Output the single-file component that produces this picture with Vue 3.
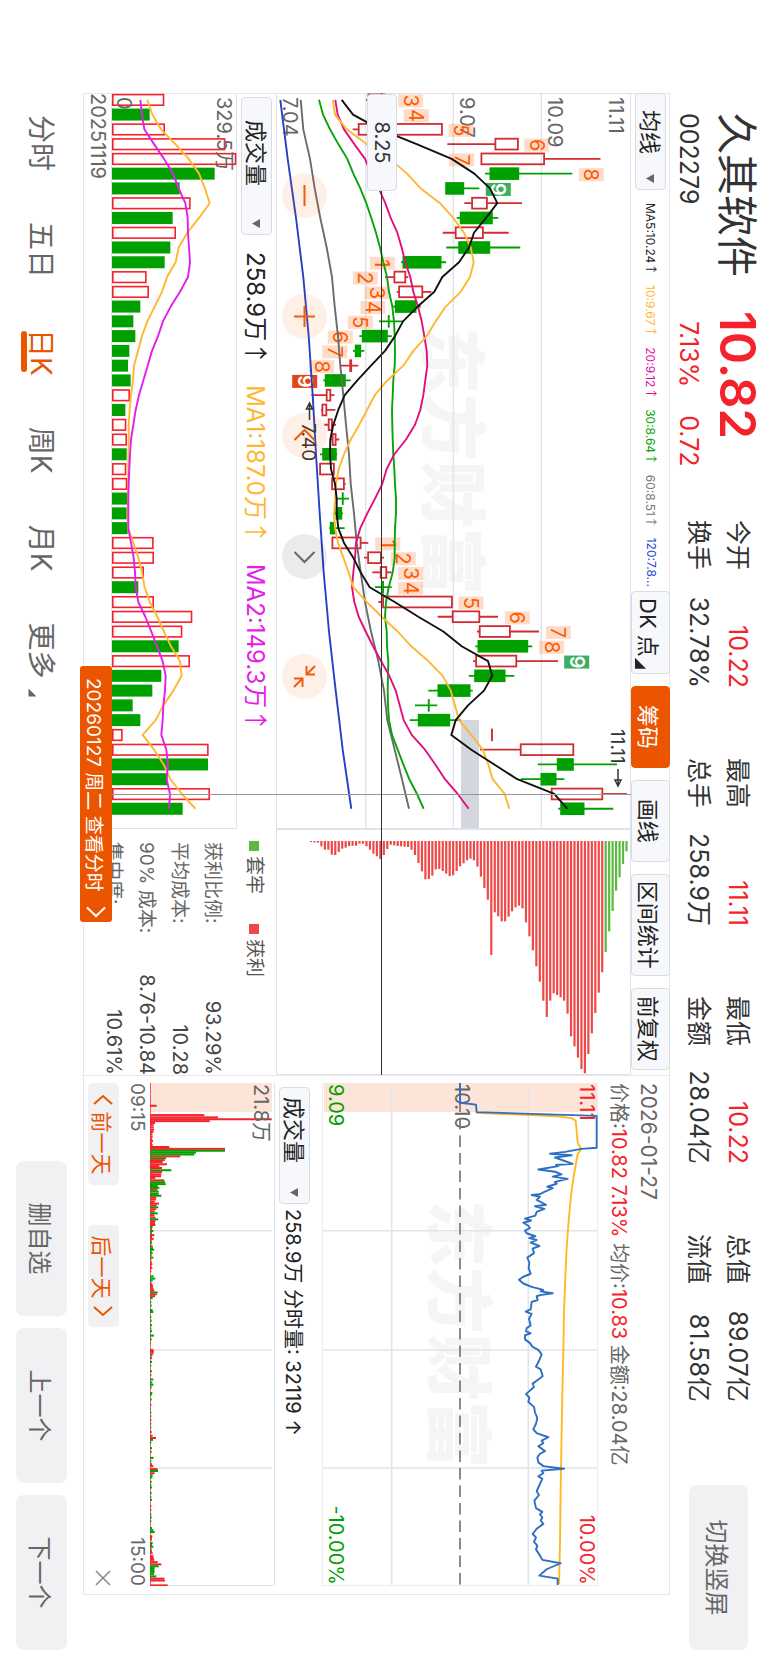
<script setup>
import { ref } from 'vue'

const period = ref('日K')
const mainIndicator = ref('均线')
const subIndicator = ref('成交量')
const minuteIndicator = ref('成交量')

const stats = [
  [['今开', '10.22', true], ['换手', '32.78%', false]],
  [['最高', '11.11', true], ['总手', '258.9万', false]],
  [['最低', '10.22', true], ['金额', '28.04亿', false]],
  [['总值', '89.07亿', false], ['流值', '81.58亿', false]]
]

const averages = [
  ['MA5:10.24', 'black', '↑'],
  ['10:9.67', 'amber', '↑'],
  ['20:9.12', 'pink', '↑'],
  ['30:8.64', 'green', '↑'],
  ['60:8.51', 'gray', '↑'],
  ['120:7.8...', 'blue', '']
]

const readings = [
  ['258.9万', 'black'],
  ['MA1:187.0万', 'amber'],
  ['MA2:149.3万', 'violet']
]

const tools = ['筹码', '画线', '区间统计', '前复权']

const costs = [
  ['获利比例:', '93.29%'],
  ['平均成本:', '10.28'],
  ['90% 成本:', '8.76-10.84'],
  ['集中度:', '10.61%']
]

const periods = ['分时', '五日', '日K', '周K', '月K', '更多']

/* Daily candles: [direction, body low, body high, wick low, wick high] */
const STEP = 14.77
const cx = (i) => 6.8 + STEP * i
const py = (v) => 631 - v
const candles = [
  ['r', 368, 385, 366, 385], ['g', 375, 390, 372, 397], ['r', 358.3, 442.3, 352.7, 442.3],
  ['r', 495, 518.3, 447.3, 518.3], ['r', 481, 544.5, 481, 600.5], ['g', 490, 518.7, 485, 572.3],
  ['g', 445.7, 463.7, 445.7, 479.3], ['r', 471.7, 487.3, 464.3, 522], ['g', 460.3, 492.3, 456.7, 498.3],
  ['r', 455.3, 483.3, 442.7, 508.7], ['g', 458.7, 489.7, 446.3, 520.3], ['g', 403, 441, 401, 446],
  ['r', 394, 405.7, 385, 408.3], ['r', 398.7, 422.7, 396.7, 431.3], ['g', 395.3, 416, 392.3, 420.7],
  ['g', 388.8, 389.2, 379, 402.7], ['g', 362.3, 387.3, 359.3, 391.7], ['g', 355.3, 360.7, 353, 364.3],
  ['r', 349.8, 351.6, 340.7, 358.3], ['g', 325.3, 345.3, 323.3, 350.7], ['r', 326.3, 330.7, 311.3, 334.3],
  ['r', 322, 326.7, 321, 335.3], ['r', 328.3, 332.3, 324.3, 336], ['r', 332.3, 336, 330.3, 339.3],
  ['g', 322.7, 336.3, 320, 337.3], ['r', 319.7, 334.3, 319.7, 334.3], ['r', 331.7, 344.3, 331.7, 345.7],
  ['g', 342.8, 343.2, 336.3, 349], ['g', 336, 341.7, 334, 343], ['g', 330.3, 334.7, 329.3, 344.7],
  ['r', 332, 361, 332, 368.3], ['r', 367.7, 381.3, 364, 384], ['r', 380.3, 386.7, 372.3, 391.7],
  ['g', 383.1, 383.5, 375, 391.7], ['r', 382.7, 452.3, 378.3, 452.3], ['r', 452.3, 479.7, 437.7, 498],
  ['r', 479.3, 510.3, 477, 539], ['g', 478, 527.7, 475.3, 532.3], ['r', 475.7, 516.7, 473, 558],
  ['g', 474.7, 505, 468.7, 514.3], ['g', 438, 470, 428.3, 472.7], ['g', 428.8, 429.2, 415, 437.3],
  ['g', 418.3, 449.7, 409.7, 461], ['r', 492, 492.4, 492, 492.4], ['r', 520.3, 573.7, 480, 573.7],
  ['g', 557.3, 573.3, 537.7, 617], ['g', 541, 556, 520.7, 564.3], ['r', 551.3, 602.7, 551.3, 627],
  ['g', 560.7, 584, 558.3, 613.3]
]

const curve = (list, stride = 1) => list.map((v, k) => `${cx(k * stride)},${py(v)}`).join(' ')
const priceLines = [
  ['blue', curve([280.3, 287.7, 296, 303.3, 308.7, 312.7, 316, 319.7, 323.7, 329, 335.7, 342.7, 351.3], 4)],
  ['gray', curve([300.7, 303.3, 310, 314.7, 320.3, 326.7, 332, 334.7, 338, 340.3, 343.3, 346, 349, 350.7, 354, 356.7, 360.7, 365, 371, 378.3, 384, 387.3, 394.7, 402, 409], 2)],
  ['green', curve([319, 323, 330, 338.3, 347.3, 353.3, 360.3, 366.3, 371.3, 376, 380, 383.3, 387, 389, 392.3, 394, 394.7, 395, 394.7, 393.3, 392.7, 392, 392.3, 392.7, 393.3, 394.3, 395, 396, 396, 395, 394.7, 394.7, 392.7, 388.7, 386, 385, 386.7, 387, 388.3, 388, 387.7, 388, 389, 392, 397.7, 403.3, 409.3, 417, 423.7])],
  ['pink', curve([335.3, 337.7, 344, 354.3, 365, 371, 378.7, 385.3, 390.7, 397.3, 401.7, 405.3, 410.3, 413.3, 418, 421.7, 424.3, 426.7, 427.3, 425.3, 423.3, 420.3, 415, 406, 394.3, 386.7, 382.3, 375, 367.3, 360.3, 356, 355, 353.3, 352, 354.3, 358.7, 365.7, 373, 381, 389.3, 395.7, 399.7, 403.7, 411.7, 425, 435.3, 445, 457.7, 468.7])],
  ['amber', curve([332.7, 335, 346.7, 366.7, 390, 407, 420.7, 440, 453.3, 464, 470.7, 473.7, 470, 460.7, 445.7, 435.7, 426.7, 413.3, 403.3, 387.3, 374.7, 367, 359.3, 350.7, 344, 338.7, 336, 335.3, 334, 335, 338, 343.3, 348.7, 353.3, 366.7, 381.7, 397.7, 411.3, 428.3, 442.7, 450.7, 455, 459, 471.3, 482.7, 488.3, 492.7, 504.7, 509.3])],
  ['black', curve([341.7, 353, 380, 416.7, 451.7, 474.3, 490, 497.3, 486, 474, 469, 459, 442.3, 434.3, 417.7, 403, 395, 385, 371, 357.3, 344.7, 338.3, 333.3, 330.3, 330, 331, 335, 336.7, 336.7, 338.3, 344, 353.3, 360.7, 369.7, 394.7, 418.3, 443.3, 461.7, 488, 492.3, 484, 468, 455.7, 451.3, 471.3, 494.3, 517.3, 554.3, 567.3])]
]

/* Nine-turn counters: [digit, candle index, level, kind] */
const counters = [
  ['3', 0, 410.7], ['4', 1, 416.3], ['5', 2, 461], ['6', 3, 536.7], ['7', 4, 461.7], ['8', 5, 591.3], ['9', 6, 498.3, 'top'],
  ['1', 11, 382.3], ['2', 12, 365.3], ['3', 13, 377], ['4', 14, 373], ['5', 15, 360.3], ['6', 16, 340.3], ['7', 17, 334.7], ['8', 18, 321.7], ['9', 19, 304.7, 'low'],
  ['1', 30, 387.7], ['2', 31, 403.3], ['3', 32, 410.7], ['4', 33, 410.7], ['5', 34, 471], ['6', 35, 517.3], ['7', 36, 558.3], ['8', 37, 551.7], ['9', 38, 576.7, 'top']
]

const axis = [['11.11', 615.7], ['10.09', 555], ['9.07', 466.7], ['7.04', 290]]

/* Chip distribution, highest price first; the leading seven are trapped chips */
const chips = [
  35, 73, 113, 153, 214, 275, 337, 398, 459, 520, 581, 643, 701, 688, 654, 620, 590, 522, 483, 473, 466, 461,
  483, 532, 483, 426, 380, 332, 290, 248, 206, 198, 203, 215, 231, 245, 245, 230, 218, 346, 180, 145, 111, 81,
  62, 57, 62, 71, 80, 94, 107, 109, 102, 94, 88, 89, 108, 118, 119, 95, 70, 46, 30, 22, 21, 20, 19, 17, 15, 28,
  46, 58, 50, 42, 30, 20, 12, 12, 18, 18, 19, 24, 27, 37, 46, 45, 30, 30, 20, 9, 8, 7
]

const volumes = [
  494, 450, 496, 677, 710, 645, 540, 573, 519, 529, 512, 495, 441, 448, 422, 401, 407, 389, 385, 393, 391, 377,
  380, 382, 381, 380, 383, 383, 381, 384, 462, 463, 433, 416, 463, 578, 548, 537, 571, 485, 458, 399, 422, 369,
  627, 625, 503, 631, 549
]
const volumeKinds = 'rgrrrggrgrggrrggggggrgrrgrrgggrrrgrrrgrggggrrggrg'
const vy = (e) => 125 - (e - 337) / 3
const volumeBars = volumes.map((e, i) => ({ x: cx(i) - 6, y: vy(e), h: (e - 337) / 3, kind: volumeKinds[i] }))
const vcurve = (list) => list.map((e, i) => `${cx(i)},${vy(e)}`).join(' ')
const volumeLines = [
  ['amber', vcurve([443, 458, 484, 527, 567, 598, 616, 630, 598, 563, 537, 528, 502, 487, 465, 443, 427, 415, 403, 400, 394, 390, 387, 387, 386, 386, 385, 385, 384, 385, 401, 416, 427, 435, 450, 473, 493, 514, 541, 546, 521, 491, 468, 429, 463, 492, 512, 547, 587])],
  ['violet', vcurve([422, 427, 434, 463, 493, 520, 537, 557, 564, 565, 568, 571, 565, 541, 513, 490, 475, 457, 444, 431, 418, 408, 401, 394, 391, 389, 387, 386, 386, 386, 394, 402, 406, 408, 416, 437, 455, 472, 489, 498, 496, 491, 489, 485, 500, 505, 501, 511, 508])]
]

/* Intraday series as flat [level, time] pairs */
const minuteX = (t) => t * 0.375 - 8
const trace = (flat) => {
  const out = []
  for (let i = 0; i < flat.length; i += 2) out.push(`${minuteX(flat[i + 1])},${288 - flat[i] / 3}`)
  return out.join(' ')
}
const averageTrace = trace([500, 101, 640, 106, 740, 110, 785, 115, 797, 122, 800, 150, 803, 180, 813, 197, 803, 212, 797, 240, 790, 275, 782, 330, 775, 400, 770, 460, 766, 540, 762, 630, 760, 740, 757, 850, 754, 1000, 752, 1100, 750, 1250, 747, 1358])
const priceTrace = trace([
  450, 22, 450, 74, 498, 79, 500, 99, 860, 109, 860, 194, 815, 197, 765, 205, 720, 210, 785, 214, 735, 220, 788, 237,
  738, 240, 745, 243, 685, 252, 735, 258, 755, 265, 728, 271, 773, 277, 735, 285, 740, 290, 712, 298, 728, 302,
  700, 313, 690, 318, 665, 320, 690, 325, 680, 333, 708, 346, 675, 350, 703, 357, 680, 365, 676, 375, 645, 383,
  663, 388, 640, 394, 655, 402, 660, 408, 645, 415, 650, 422, 676, 430, 658, 435, 680, 440, 662, 447, 688, 456,
  668, 463, 672, 475, 652, 487, 658, 500, 656, 515, 662, 530, 640, 538, 627, 546, 640, 556, 665, 565, 700, 573,
  692, 577, 728, 582, 690, 587, 680, 590, 683, 600, 665, 605, 662, 625, 647, 631, 665, 637, 657, 650, 662, 668,
  650, 675, 648, 683, 662, 689, 645, 694, 645, 705, 660, 715, 668, 725, 685, 733, 695, 745, 688, 760, 678, 778,
  692, 785, 698, 803, 685, 812, 668, 823, 672, 832, 648, 851, 658, 860, 655, 872, 672, 885, 675, 900, 682, 915,
  678, 930, 670, 945, 680, 955, 715, 966, 695, 975, 700, 982, 685, 990, 705, 1003, 690, 1010, 682, 1020, 685, 1033,
  700, 1043, 762, 1050, 695, 1055, 700, 1062, 685, 1070, 697, 1077, 690, 1090, 680, 1110, 687, 1120, 673, 1135,
  678, 1155, 697, 1165, 690, 1172, 697, 1180, 692, 1188, 700, 1197, 680, 1210, 668, 1224, 678, 1233, 672, 1245,
  682, 1255, 678, 1265, 690, 1282, 697, 1293, 752, 1302, 710, 1318, 688, 1335, 743, 1343, 743, 1360
])

const minuteVolumes = `82r472 107r615 113r656 118r817 123r631 128r467 134r463 140r463 146r464 152r462 158r459 164r460 170r459 176r461
182r458 187r460 192r510 197r677 202g677 207g590 212g585 217r543 222g500 227r496 232r490 238r503 243r480 248r488 254g516 259r488
265r486 270r485 275r468 281r495 286g497 291g499 296g475 301g480 306r474 311g478 317g478 322g486 327r471 332r470 338r466 343r479
348r472 353g477 358r470 364r466 369g475 374r465 380r468 385g477 390r468 395r467 400r468 405g460 410r458 416g462 422g458 427r465
432r458 437r463 442r457 447g458 452g456 457r460 462g461 466g464 471g457 475g460 481r457 487g462 493r456 500r458 505r459 510r456
515r459 523r456 537g463 543g468 548g460 555r457 560r460 565r461 570r463 575r465 580g475 585r472 590r467 595g460 605g456 615g457
627g460 632g462 645g456 655g457 667g458 676g456 683g458 695g464 705g457 715r455 733r462 738r464 743r462 748g459 755r458 765g458
775g456 790g458 800r456 812g462 820g459 826g462 833g457 848g459 853g457 865g457 880r456 890g455 900g456 910r456 920g456 930r456
940g456 952r457 962r460 968r470 973g461 980g456 995g458 1005g457 1021g463 1030g456 1038r458 1043r462 1051r475 1056g476 1062r466
1068g460 1073g459 1085g457 1093g456 1100g458 1115g457 1125g456 1133g458 1150r456 1160r456 1172g456 1180g457 1190g456 1208g458
1214g462 1219g466 1230r459 1235r458 1240r457 1248g460 1253r458 1258g462 1265g457 1270r458 1275r460 1283r462 1288r463 1293r465
1299r475 1305r486 1310g478 1315g466 1320g465 1325g466 1331g464 1337g471 1343r495 1348r497 1361r505`
  .split(/\s+/)
  .map((token) => {
    const [, t, kind, e] = token.match(/(\d+)([rg])(\d+)/)
    const h = (e - 452) / 3
    return { x: minuteX(t) - 1, y: 125 - h, h, kind }
  })
</script>

<template>
  <div class="viewport">
    <main class="stage">
      <header class="header">
        <div class="identity">
          <h1>久其软件</h1>
          <p>002279</p>
        </div>
        <div class="quote">
          <strong>10.82</strong>
          <p><span>7.13%</span><span>0.72</span></p>
        </div>
        <div class="stats">
          <dl v-for="(column, i) in stats" :key="i">
            <div v-for="row in column" :key="row[0]">
              <dt>{{ row[0] }}</dt>
              <dd :class="{ up: row[2] }">{{ row[1] }}</dd>
            </div>
          </dl>
        </div>
        <button class="soft switch" type="button">切换竖屏</button>
      </header>

      <div class="panel">
        <section class="daily">
          <div class="toolbar">
            <label class="pick pick-main">
              <select v-model="mainIndicator" aria-label="主图指标"><option>均线</option></select>
              <i class="caret"></i>
            </label>
            <ul class="averages">
              <li v-for="a in averages" :key="a[0]" :class="'ink-' + a[1]">{{ a[0] }}<span v-if="a[2]" class="arrow">{{ a[2] }}</span></li>
            </ul>
            <div class="tools">
              <button class="tool corner" type="button">DK 点</button>
              <button v-for="t in tools" :key="t" class="tool" :class="{ on: t === '筹码' }" type="button">{{ t }}</button>
            </div>
          </div>

          <div class="charts">
            <svg viewBox="0 0 736 355" class="kline">
              <text class="watermark" x="234" y="203">东方财富</text>
              <rect x="627" y="152" width="109" height="18" fill="#d3d6dc" />
              <path class="grid" d="M0 89.7H736M0 177.7H736M0 265.3H736" />
              <path class="frame" d="M0.5 0.5H735.5V354.5H0.5Z" />
              <text v-for="a in axis" :key="a[0]" class="axis" x="4" :y="py(a[1]) + 7">{{ a[0] }}</text>
              <g v-for="(c, i) in candles" :key="i" :class="'candle-' + c[0]">
                <path :d="`M${cx(i)} ${py(c[4])}V${py(c[2])}M${cx(i)} ${py(c[1])}V${py(c[3])}`" />
                <rect :x="cx(i) - 5.4" :y="py(c[2]) + 0.4" width="10.8" :height="Math.max(c[2] - c[1] - 0.8, 0.1)" />
              </g>
              <g v-for="(n, i) in counters" :key="'n' + i" class="counter" :class="n[3]">
                <rect :x="cx(n[1]) - 5.5" :y="py(n[2]) - 12.5" width="13" height="25" />
                <text :x="cx(n[1]) + 1" :y="py(n[2]) + 7">{{ n[0] }}</text>
              </g>
              <polyline v-for="l in priceLines" :key="l[0]" class="line" :class="'stroke-' + l[0]" :points="l[1]" />
              <g class="mark">
                <text x="330" y="329">7.40</text>
                <path d="M327 321.5H310M316 318.5L310 321.5L316 324.5Z" />
                <text x="636" y="20">11.11</text>
                <path d="M676 13H692M687 10L693 13L687 16Z" />
              </g>
            </svg>
            <svg viewBox="0 0 246 355" class="chips">
              <path class="frame" d="M0.5 0.5H245.5V354.5H0.5Z" />
              <rect
                v-for="(e, i) in chips"
                :key="i"
                :x="12"
                :y="3.4 + i * 3.467"
                :width="(e - 4) / 3"
                height="2.2"
                :fill="i < 7 ? '#5cb942' : '#ef4848'"
              />
            </svg>
          </div>

          <div class="subhead">
            <label class="pick pick-sub">
              <select v-model="subIndicator" aria-label="副图指标"><option>成交量</option></select>
              <i class="caret"></i>
            </label>
            <p class="readings">
              <span v-for="r in readings" :key="r[0]" :class="'ink-' + r[1]">{{ r[0] }}<span class="arrow">↑</span></span>
            </p>
            <p class="legend"><span class="trapped">套牢</span><span class="profit">获利</span></p>
          </div>

          <div class="lower">
            <div class="volume">
              <svg viewBox="0 0 736 125">
                <path class="frame" d="M0 0.5H735.5V125" />
                <rect
                  v-for="(b, i) in volumeBars"
                  :key="i"
                  :class="'vol-' + b.kind"
                  :x="b.kind === 'r' ? b.x + 0.8 : b.x"
                  :y="b.kind === 'r' ? b.y + 0.8 : b.y"
                  :width="b.kind === 'r' ? 10.6 : 12"
                  :height="b.kind === 'r' ? b.h - 1.6 : b.h"
                />
                <polyline v-for="l in volumeLines" :key="l[0]" class="line" :class="'stroke-' + l[0]" :points="l[1]" />
                <text class="axis" x="4" y="20">329.5万</text>
                <text class="axis" x="4" y="120">0</text>
              </svg>
              <p class="from">20251119</p>
            </div>
            <dl class="costs">
              <div v-for="c in costs" :key="c[0]">
                <dt>{{ c[0] }}</dt>
                <dd>{{ c[1] }}</dd>
              </div>
            </dl>
          </div>

          <i class="cross-v"></i>
          <i class="cross-h"></i>
          <span class="price-tag">8.25</span>
          <button class="round zoom-out" type="button" aria-label="缩小">
            <svg viewBox="0 0 45 45"><path d="M12 22.5H33" /></svg>
          </button>
          <button class="round zoom-in" type="button" aria-label="放大">
            <svg viewBox="0 0 45 45"><path d="M12 22.5H33M22.5 12V33" /></svg>
          </button>
          <button class="round prev" type="button" aria-label="向左">
            <svg viewBox="0 0 45 45"><path d="M27 12.5L17 22.5L27 32.5" /></svg>
          </button>
          <button class="round next" type="button" aria-label="向右">
            <svg viewBox="0 0 45 45"><path d="M18 12.5L28 22.5L18 32.5" /></svg>
          </button>
          <button class="round shrink" type="button" aria-label="收起">
            <svg viewBox="0 0 45 45"><path d="M12 12L20.5 20.5M12 20.5H20.5V12M33 33L24.5 24.5M24.5 33V24.5H33" /></svg>
          </button>
          <button class="day-tag" type="button">
            20260127 周二 查看分时
            <svg viewBox="0 0 12 20"><path d="M1.5 1L10 10L1.5 19" /></svg>
          </button>
        </section>

        <section class="minute">
          <p class="date">2026-01-27</p>
          <p class="info">价格:<b>10.82 7.13%</b> 均价:<b>10.83</b> 金额:28.04亿</p>
          <svg viewBox="0 0 503 276" class="trend">
            <text class="watermark" x="117" y="164">东方财富</text>
            <rect x="0" y="1" width="29" height="273" fill="#fce5d8" />
            <path class="grid" d="M0 69.7H503M0 206.3H503M147.7 1V275M267 1V275M385 1V275" />
            <path class="faint" d="M0 0.5H502.5V275.5H0" />
            <text class="axis red" x="1" y="18">11.11</text>
            <text class="axis" x="1" y="143">10.10</text>
            <text class="axis lime" x="1" y="269">9.09</text>
            <text class="axis red end" x="502" y="18">10.00%</text>
            <text class="axis lime end" x="502" y="269">-10.00%</text>
            <path class="dash" d="M0 138H503" />
            <polyline class="line stroke-gold" :points="averageTrace" />
            <polyline class="line stroke-sky" :points="priceTrace" />
          </svg>
          <div class="minute-head">
            <label class="pick pick-minute">
              <select v-model="minuteIndicator" aria-label="分时指标"><option>成交量</option></select>
              <i class="caret"></i>
            </label>
            <p>258.9万 分时量: 32119 ↑</p>
          </div>
          <svg viewBox="0 0 503 125" class="minute-volume">
            <rect x="0" y="3" width="29" height="122" fill="#fce5d8" />
            <path class="grid" d="M147.7 3V125M267 3V125M385 3V125" />
            <path class="frame" d="M0 0.5H502.5V125" />
            <path class="base" d="M0 124.5H503" />
            <rect v-for="(b, i) in minuteVolumes" :key="i" :class="'min-' + b.kind" :x="b.x" :y="b.y" width="2" :height="b.h" />
            <text class="axis" x="1" y="21">21.8万</text>
          </svg>
          <p class="times"><span>09:15</span><span>15:00</span></p>
          <div class="pager">
            <button type="button"><svg viewBox="0 0 12 20"><path d="M10 1L2 10L10 19" /></svg>前一天</button>
            <button type="button">后一天<svg viewBox="0 0 12 20"><path d="M2 1L10 10L2 19" /></svg></button>
            <button class="close" type="button" aria-label="关闭">
              <svg viewBox="0 0 16 16"><path d="M1 1L15 15M15 1L1 15" /></svg>
            </button>
          </div>
        </section>
      </div>

      <footer class="footer">
        <nav class="periods">
          <button
            v-for="p in periods"
            :key="p"
            type="button"
            :class="{ active: p === period, more: p === '更多' }"
            @click="period = p"
          >{{ p }}</button>
        </nav>
        <div class="actions">
          <button class="soft" type="button">删自选</button>
          <button class="soft" type="button">上一个</button>
          <button class="soft" type="button">下一个</button>
        </div>
      </footer>
    </main>
  </div>
</template>

<style>
body {
  margin: 0;
  background: #fff;
}
</style>

<style scoped>
.viewport {
  height: 100vh;
  overflow: hidden;
  background: #fff;
}
/* Landscape screen held in a portrait window */
.stage {
  width: 100vh;
  height: 100vw;
  display: flex;
  flex-direction: column;
  transform-origin: 0 0;
  transform: translateX(100vw) rotate(90deg);
  font-family: Inter, "Noto Sans CJK SC", sans-serif;
  color: #333;
}
.stage * {
  box-sizing: border-box;
}
p, h1, dl, dd, ul {
  margin: 0;
  padding: 0;
}
li {
  list-style: none;
}
button, select {
  font-family: inherit;
  margin: 0;
  padding: 0;
  border: 0;
  background: none;
  color: inherit;
}
svg {
  display: block;
}
svg path {
  fill: none;
}
.arrow {
  font-family: "Noto Sans CJK SC", sans-serif;
}

.header {
  flex: none;
  height: 98px;
  display: flex;
  align-items: flex-start;
  padding: 0 13px 0 113px;
}
.identity {
  width: 198px;
  padding-top: 7px;
}
h1 {
  font-size: 41px;
  font-weight: 400;
  line-height: 48px;
  white-space: nowrap;
}
.identity p, .quote p {
  margin-top: 9px;
  font-size: 25px;
  line-height: 30px;
}
.quote {
  width: 209px;
  padding-top: 7px;
  color: #f4222a;
}
.quote strong {
  display: block;
  font-size: 49px;
  font-weight: 600;
  line-height: 48px;
}
.quote p {
  display: flex;
  gap: 28px;
  padding-left: 10px;
}
.stats {
  display: grid;
  grid-template-columns: repeat(4, 168px);
  column-gap: 70px;
  padding-top: 11px;
  font-size: 25px;
  line-height: 39px;
}
.stats dl > div {
  display: flex;
  justify-content: space-between;
  white-space: nowrap;
}
.up {
  color: #f4222a;
}
.soft {
  width: 155px;
  height: 51px;
  border-radius: 8px;
  background: #f1f1f4;
  color: #666;
  font-size: 24px;
}
.switch {
  width: 165px;
  height: 59px;
  margin: 20px 0 0 auto;
}

.panel {
  flex: 1;
  min-height: 0;
  display: grid;
  grid-template-columns: 982fr 520fr;
  margin: 0 68px 0 93px;
  outline: 1px solid #e8e8ec;
  outline-offset: -1px;
}
.daily {
  position: relative;
  min-width: 0;
}
.toolbar {
  height: 39px;
  display: flex;
  align-items: center;
}
.pick {
  position: relative;
  flex: none;
  display: block;
  height: 31px;
}
.pick select {
  width: 100%;
  height: 100%;
  appearance: none;
  border: 1px solid #d9dce4;
  border-radius: 4px;
  background: #f7f8fb;
  color: #222;
  font-size: 22px;
}
.pick-main {
  width: 97px;
}
.pick-main select {
  padding-left: 16px;
}
.pick-sub {
  width: 138px;
}
.pick-sub select {
  padding-left: 22px;
}
.pick-minute {
  width: 117px;
}
.pick-minute select {
  padding-left: 9px;
}
.caret {
  position: absolute;
  right: 7px;
  top: 12px;
  width: 9px;
  height: 8px;
  background: #666;
  clip-path: polygon(0 0, 100% 0, 50% 100%);
  pointer-events: none;
}
.averages {
  flex: none;
  width: 384px;
  display: flex;
  justify-content: space-between;
  margin-left: 13px;
  font-size: 12px;
  line-height: 20px;
  white-space: nowrap;
}
.tools {
  display: flex;
  gap: 12px;
  margin-left: 4px;
}
.tool {
  position: relative;
  min-width: 82px;
  height: 39px;
  padding: 0 6px;
  border: 1px solid #d9dce4;
  border-radius: 4px;
  background: #f7f8fb;
  color: #222;
  font-size: 22px;
  white-space: nowrap;
}
.tool.on {
  border-color: #eb5500;
  background: #eb5500;
  color: #fff;
}
.corner {
  padding-right: 16px;
}
.corner::after {
  content: "";
  position: absolute;
  right: 4px;
  bottom: 3px;
  width: 11px;
  height: 11px;
  background: #222;
  clip-path: polygon(100% 0, 100% 100%, 0 100%);
}

.charts {
  display: grid;
  grid-template-columns: 736fr 246fr;
}
.grid {
  stroke: #e0e4ec;
  stroke-width: 1.5;
}
.frame {
  stroke: #dfe2e8;
}
.faint {
  stroke: #ececf0;
}
.watermark {
  font-family: "Noto Sans CJK SC", sans-serif;
  font-size: 67px;
  font-weight: 900;
  fill: #f5f5f6;
}
.axis {
  font-size: 20px;
  fill: #666;
}
.axis.red {
  fill: #f4222a;
}
.axis.lime {
  fill: #00a000;
}
.axis.end {
  text-anchor: end;
}
.candle-r {
  fill: none;
  stroke: #d12c32;
  stroke-width: 1.8;
}
.candle-g {
  fill: #00a000;
  stroke: #00a000;
  stroke-width: 1.8;
}
.counter rect {
  fill: #ff7830;
  fill-opacity: 0.26;
}
.counter text {
  fill: #ff5a00;
  font-size: 20px;
  text-anchor: middle;
}
.counter.top rect {
  fill: #3cae60;
  fill-opacity: 1;
}
.counter.low rect {
  fill: #e54516;
  fill-opacity: 1;
}
.counter.top text, .counter.low text {
  fill: #fff;
  font-weight: 600;
}
.line {
  fill: none;
  stroke-width: 1.9;
  stroke-linejoin: round;
}
.stroke-blue { stroke: #2541c4; }
.stroke-gray { stroke: #6b6b6b; }
.stroke-green { stroke: #08a408; }
.stroke-pink { stroke: #e0107f; }
.stroke-amber { stroke: #ffb732; }
.stroke-black { stroke: #111; }
.stroke-violet { stroke: #e41ee8; }
.stroke-gold { stroke: #ffb822; }
.stroke-sky { stroke: #2d6fc0; }
.ink-black { color: #222; }
.ink-amber { color: #ffb732; }
.ink-pink { color: #e0109f; }
.ink-green { color: #08a408; }
.ink-gray { color: #777; }
.ink-blue { color: #2541d4; }
.ink-violet { color: #e41ee8; }
.mark text {
  font-size: 19px;
  fill: #333;
}
.mark path {
  stroke: #333;
  stroke-width: 1.5;
}

.subhead {
  height: 39px;
  display: flex;
  align-items: center;
  padding-left: 4px;
}
.readings {
  width: 606px;
  display: flex;
  gap: 20px;
  padding-left: 17px;
  font-size: 24px;
  line-height: 36px;
  white-space: nowrap;
}
.legend {
  display: flex;
  gap: 30px;
  padding-top: 4px;
  font-size: 19px;
  line-height: 35px;
  color: #555;
}
.legend span {
  display: flex;
  align-items: center;
  gap: 5px;
}
.legend span::before {
  content: "";
  width: 10px;
  height: 10px;
  background: #5cb942;
}
.legend .profit::before {
  background: #ef4848;
}

.lower {
  display: grid;
  grid-template-columns: 736fr 246fr;
}
.vol-r {
  fill: #fff;
  stroke: #f4222a;
  stroke-width: 1.6;
}
.vol-g {
  fill: #00a000;
}
.from {
  border-top: 1px solid #dfe2e8;
  font-size: 20px;
  line-height: 27px;
  color: #666;
}
.costs {
  padding: 8px 0 0 13px;
  line-height: 33px;
}
.costs > div {
  display: flex;
  justify-content: space-between;
}
.costs dt {
  font-size: 19px;
  color: #666;
}
.costs dd {
  font-size: 20px;
  color: #444;
}

.cross-v, .cross-h {
  position: absolute;
  pointer-events: none;
}
.cross-v {
  left: 701px;
  top: 39px;
  width: 1px;
  height: 519px;
  background: #999;
}
.cross-h {
  left: 0;
  right: 0;
  top: 288px;
  height: 1px;
  background: #333;
}
.price-tag {
  position: absolute;
  left: 1px;
  top: 273px;
  width: 97px;
  height: 30px;
  border: 1px solid #d9dce4;
  border-radius: 4px;
  background: #f7f8fb;
  font-size: 20px;
  line-height: 28px;
  text-align: center;
}
.round {
  position: absolute;
  top: 343px;
  width: 45px;
  height: 45px;
  border-radius: 50%;
  background: rgba(245, 100, 20, 0.1);
  stroke: #f25a0c;
  stroke-width: 2;
}
.zoom-out { left: 80px; }
.zoom-in { left: 201px; }
.prev { left: 320px; }
.next {
  left: 441px;
  background: rgba(0, 0, 0, 0.08);
  stroke: #666;
}
.shrink { left: 561px; }
.day-tag {
  position: absolute;
  left: 573px;
  top: 558px;
  min-width: 256px;
  height: 32px;
  display: flex;
  align-items: center;
  justify-content: space-between;
  gap: 4px;
  padding: 0 4px 0 12px;
  border-radius: 3px;
  background: #eb5500;
  color: #fff;
  font-size: 19px;
  white-space: nowrap;
}
.day-tag svg {
  width: 12px;
  height: 20px;
  stroke: #fff;
  stroke-width: 2;
}

.minute {
  min-width: 0;
  padding: 7px 9px 0 7px;
  border-left: 1px solid #e8e8ec;
  color: #666;
}
.date {
  font-size: 21px;
  line-height: 30px;
}
.info {
  margin-bottom: 7px;
  font-size: 20px;
  line-height: 28px;
  white-space: nowrap;
}
.info b {
  font-weight: 400;
  color: #f4222a;
}
.dash {
  stroke: #777;
  stroke-width: 1.7;
  stroke-dasharray: 11.5 6;
}
.minute-head {
  display: flex;
  align-items: center;
  gap: 5px;
  margin: 12px 0 4px 4px;
  color: #222;
  font-size: 20px;
  white-space: nowrap;
}
.base {
  stroke: #f4222a;
  stroke-opacity: 0.7;
}
.min-r {
  fill: #f4222a;
}
.min-g {
  fill: #00a000;
}
.times {
  display: flex;
  justify-content: space-between;
  font-size: 19px;
  line-height: 26px;
}
.pager {
  display: flex;
  align-items: center;
  gap: 40px;
  margin-top: 5px;
}
.pager button {
  width: 102px;
  height: 31px;
  display: flex;
  align-items: center;
  justify-content: center;
  gap: 6px;
  border-radius: 5px;
  background: #f1f1f4;
  color: #eb5500;
  font-size: 21px;
}
.pager svg {
  width: 12px;
  height: 20px;
  stroke: #eb5500;
  stroke-width: 2;
}
.pager .close {
  width: 16px;
  margin-left: auto;
  background: none;
}
.pager .close svg {
  width: 16px;
  height: 16px;
  stroke: #888;
  stroke-width: 1.5;
}

.footer {
  flex: none;
  height: 83px;
  display: flex;
  justify-content: space-between;
  align-items: center;
  padding: 0 13px 0 115px;
}
.periods {
  display: flex;
  gap: 51px;
}
.periods button {
  position: relative;
  font-size: 28px;
  line-height: 40px;
  color: #666;
}
.periods .active {
  color: #eb5500;
}
.periods .active::after {
  content: "";
  position: absolute;
  left: 2px;
  right: 4px;
  bottom: 0;
  height: 6px;
  border-radius: 3px;
  background: #eb5500;
}
.periods .more::after {
  content: "";
  position: absolute;
  left: 66px;
  bottom: 7px;
  width: 8px;
  height: 8px;
  background: #666;
  clip-path: polygon(100% 0, 100% 100%, 0 100%);
}
.actions {
  display: flex;
  gap: 12px;
}
</style>
